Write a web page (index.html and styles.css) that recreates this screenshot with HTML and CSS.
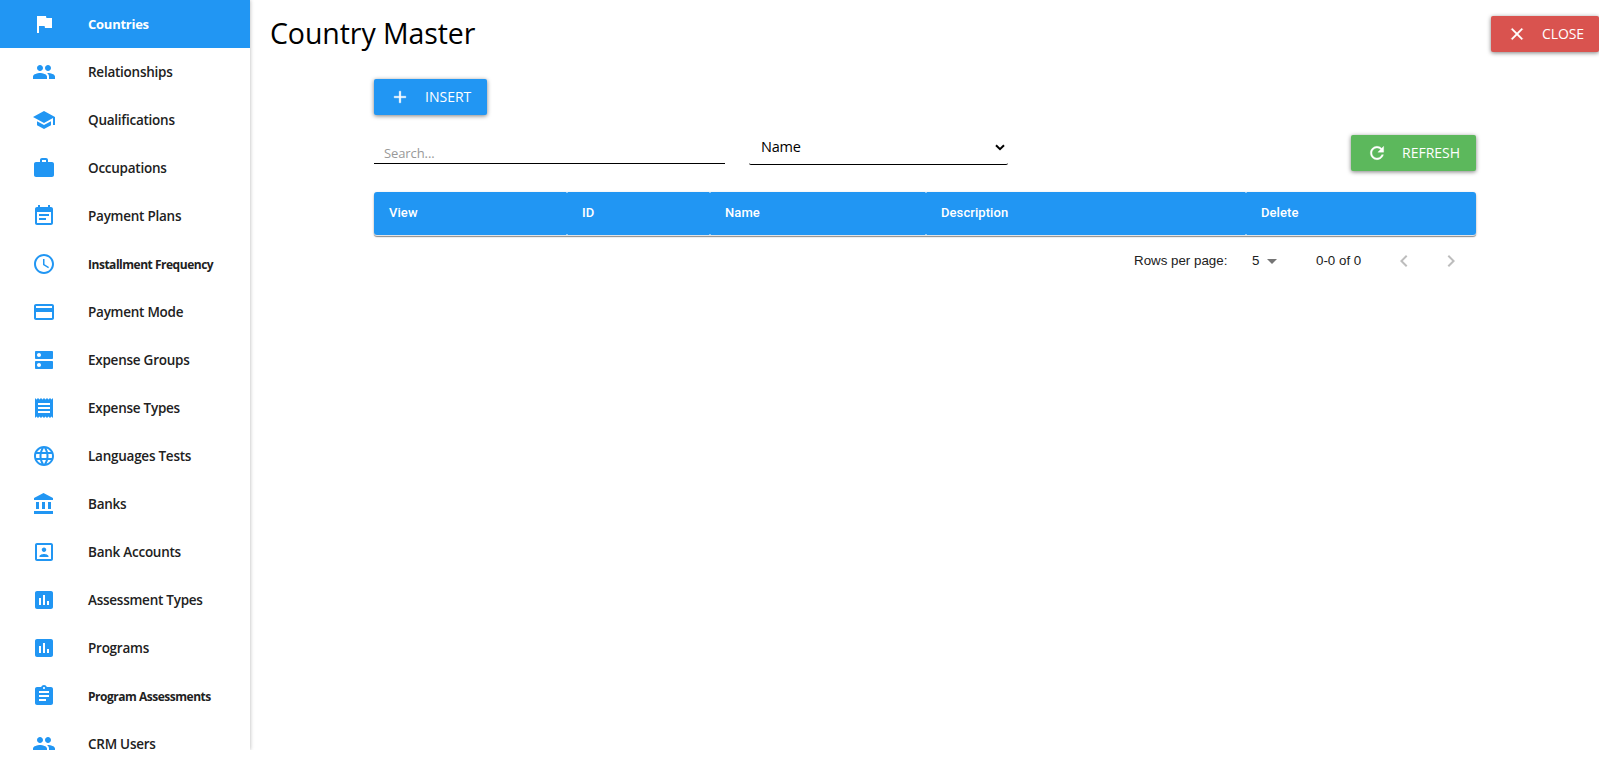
FILE: index.html
```html
<!DOCTYPE html>
<html lang="en">
<head>
<meta charset="utf-8">
<title>Country Master</title>
<link rel="stylesheet" href="styles.css">
</head>
<body>
<div class="app">
  <nav class="sidebar">
    <a class="item active"><svg viewBox="0 0 24 24"><path d="M14.4 6L14 4H5v17h2v-7h5.6l.4 2h7V6z"/></svg><span>Countries</span></a>
    <a class="item"><svg viewBox="0 0 24 24"><path d="M16 11c1.66 0 2.99-1.34 2.99-3S17.66 5 16 5c-1.66 0-3 1.34-3 3s1.34 3 3 3zm-8 0c1.66 0 2.99-1.34 2.99-3S9.66 5 8 5C6.34 5 5 6.34 5 8s1.34 3 3 3zm0 2c-2.33 0-7 1.17-7 3.5V19h14v-2.5c0-2.33-4.67-3.5-7-3.5zm8 0c-.29 0-.62.02-.97.05 1.16.84 1.97 1.97 1.97 3.45V19h6v-2.5c0-2.33-4.67-3.5-7-3.5z"/></svg><span>Relationships</span></a>
    <a class="item"><svg viewBox="0 0 24 24"><path d="M5 13.18v4L12 21l7-3.82v-4L12 17l-7-3.82zM12 3L1 9l11 6 9-4.91V17h2V9L12 3z"/></svg><span>Qualifications</span></a>
    <a class="item"><svg viewBox="0 0 24 24"><path d="M20 6h-4V4c0-1.11-.89-2-2-2h-4c-1.11 0-2 .89-2 2v2H4c-1.11 0-1.99.89-1.99 2L2 19c0 1.11.89 2 2 2h16c1.11 0 2-.89 2-2V8c0-1.11-.89-2-2-2zm-6 0h-4V4h4v2z"/></svg><span>Occupations</span></a>
    <a class="item"><svg viewBox="0 0 24 24"><path d="M17 10H7v2h10v-2zm2-7h-1V1h-2v2H8V1H6v2H5c-1.11 0-1.99.9-1.99 2L3 19c0 1.1.89 2 2 2h14c1.1 0 2-.9 2-2V5c0-1.1-.9-2-2-2zm0 16H5V8h14v11zm-5-5H7v2h7v-2z"/></svg><span>Payment Plans</span></a>
    <a class="item small"><svg viewBox="0 0 24 24"><path d="M11.99 2C6.47 2 2 6.48 2 12s4.47 10 9.99 10C17.52 22 22 17.52 22 12S17.52 2 11.99 2zM12 20c-4.42 0-8-3.58-8-8s3.58-8 8-8 8 3.58 8 8-3.58 8-8 8zm.5-13H11v6l5.25 3.15.75-1.23-4.5-2.67z"/></svg><span>Installment Frequency</span></a>
    <a class="item"><svg viewBox="0 0 24 24"><path d="M20 4H4c-1.11 0-1.99.89-1.99 2L2 18c0 1.11.89 2 2 2h16c1.11 0 2-.89 2-2V6c0-1.11-.89-2-2-2zm0 14H4v-6h16v6zm0-10H4V6h16v2z"/></svg><span>Payment Mode</span></a>
    <a class="item"><svg viewBox="0 0 24 24"><path d="M20 13H4c-.55 0-1 .45-1 1v6c0 .55.45 1 1 1h16c.55 0 1-.45 1-1v-6c0-.55-.45-1-1-1zM7 19c-1.1 0-2-.9-2-2s.9-2 2-2 2 .9 2 2-.9 2-2 2zM20 3H4c-.55 0-1 .45-1 1v6c0 .55.45 1 1 1h16c.55 0 1-.45 1-1V4c0-.55-.45-1-1-1zM7 9c-1.1 0-2-.9-2-2s.9-2 2-2 2 .9 2 2-.9 2-2 2z"/></svg><span>Expense Groups</span></a>
    <a class="item"><svg viewBox="0 0 24 24"><path d="M18 17H6v-2h12v2zm0-4H6v-2h12v2zm0-4H6V7h12v2zM3 22l1.5-1.5L6 22l1.5-1.5L9 22l1.5-1.5L12 22l1.5-1.5L15 22l1.5-1.5L18 22l1.5-1.5L21 22V2l-1.5 1.5L18 2l-1.5 1.5L15 2l-1.5 1.5L12 2l-1.5 1.5L9 2 7.500 3.500 6 2 4.500 3.500 3 2v20z"/></svg><span>Expense Types</span></a>
    <a class="item"><svg viewBox="0 0 24 24"><path d="M11.990 2C6.470 2 2 6.480 2 12s4.470 10 9.990 10C17.520 22 22 17.520 22 12S17.520 2 11.990 2zm6.930 6h-2.950c-.32-1.250-.78-2.450-1.380-3.560 1.840.63 3.370 1.910 4.330 3.560zM12 4.040c.83 1.200 1.480 2.530 1.910 3.960h-3.820c.43-1.430 1.080-2.760 1.910-3.960zM4.260 14C4.100 13.360 4 12.690 4 12s.1-1.360.26-2h3.380c-.08.66-.14 1.320-.14 2s.06 1.340.14 2H4.260zm.82 2h2.950c.32 1.250.78 2.450 1.380 3.560-1.840-.63-3.370-1.900-4.330-3.560zm2.950-8H5.080c.96-1.660 2.490-2.930 4.330-3.560C8.810 5.550 8.350 6.750 8.030 8zM12 19.960c-.83-1.200-1.480-2.530-1.910-3.960h3.820c-.43 1.430-1.080 2.760-1.910 3.960zM14.340 14H9.660c-.09-.66-.16-1.320-.16-2s.07-1.350.16-2h4.680c.09.65.16 1.320.16 2s-.07 1.340-.16 2zm.25 5.560c.6-1.110 1.060-2.310 1.380-3.560h2.950c-.96 1.650-2.490 2.930-4.330 3.560zM16.360 14c.08-.66.14-1.320.14-2s-.06-1.340-.14-2h3.380c.16.64.26 1.310.26 2s-.1 1.360-.26 2h-3.380z"/></svg><span>Languages Tests</span></a>
    <a class="item"><svg viewBox="0 0 24 24"><path d="M4 10v7h3v-7H4zm6 0v7h3v-7h-3zM2 22h19v-3H2v3zm14-12v7h3v-7h-3zm-4.500-9L2 6v2h19V6l-9.500-5z"/></svg><span>Banks</span></a>
    <a class="item"><svg viewBox="0 0 24 24"><path d="M19 5v14H5V5h14m0-2H5c-1.100 0-2 .9-2 2v14c0 1.100.9 2 2 2h14c1.100 0 2-.9 2-2V5c0-1.100-.9-2-2-2zm-7 9c-1.240 0-2.250-1.010-2.250-2.250S10.760 7.500 12 7.500s2.250 1.010 2.250 2.250S13.240 12 12 12zm4.500 5h-9v-.75c0-1.500 3-2.250 4.500-2.250s4.500.75 4.500 2.250V17z"/></svg><span>Bank Accounts</span></a>
    <a class="item"><svg viewBox="0 0 24 24"><path d="M19 3H5c-1.100 0-2 .9-2 2v14c0 1.100.9 2 2 2h14c1.100 0 2-.9 2-2V5c0-1.100-.9-2-2-2zM9 17H7v-7h2v7zm4 0h-2V7h2v10zm4 0h-2v-4h2v4z"/></svg><span>Assessment Types</span></a>
    <a class="item"><svg viewBox="0 0 24 24"><path d="M19 3H5c-1.100 0-2 .9-2 2v14c0 1.100.9 2 2 2h14c1.100 0 2-.9 2-2V5c0-1.100-.9-2-2-2zM9 17H7v-7h2v7zm4 0h-2V7h2v10zm4 0h-2v-4h2v4z"/></svg><span>Programs</span></a>
    <a class="item small"><svg viewBox="0 0 24 24"><path d="M19 3h-4.180C14.400 1.840 13.300 1 12 1c-1.300 0-2.400.84-2.820 2H5c-1.100 0-2 .9-2 2v14c0 1.100.9 2 2 2h14c1.100 0 2-.9 2-2V5c0-1.100-.9-2-2-2zm-7 0c.55 0 1 .45 1 1s-.45 1-1 1-1-.45-1-1 .45-1 1-1zm2 14H7v-2h7v2zm3-4H7v-2h10v2zm0-4H7V7h10v2z"/></svg><span>Program Assessments</span></a>
    <a class="item"><svg viewBox="0 0 24 24"><path d="M16 11c1.660 0 2.990-1.340 2.990-3S17.660 5 16 5c-1.660 0-3 1.340-3 3s1.340 3 3 3zm-8 0c1.660 0 2.990-1.340 2.990-3S9.660 5 8 5C6.340 5 5 6.340 5 8s1.340 3 3 3zm0 2c-2.330 0-7 1.170-7 3.500V19h14v-2.500c0-2.330-4.670-3.500-7-3.500zm8 0c-.29 0-.62.02-.97.05 1.160.84 1.970 1.970 1.970 3.450V19h6v-2.500c0-2.330-4.670-3.500-7-3.500z"/></svg><span>CRM Users</span></a>
  </nav>
  <main class="main">
    <header class="top">
      <h1>Country Master</h1>
      <button class="btn close"><svg viewBox="0 0 24 24"><path d="M19 6.410L17.590 5 12 10.590 6.410 5 5 6.410 10.590 12 5 17.590 6.410 19 12 13.410 17.590 19 19 17.590 13.410 12z"/></svg><span>CLOSE</span></button>
    </header>
    <section class="content">
      <button class="btn insert"><svg viewBox="0 0 24 24"><path d="M19 13h-6v6h-2v-6H5v-2h6V5h2v6h6v2z"/></svg><span>INSERT</span></button>
      <div class="filters">
        <input class="search" placeholder="Search...">
        <div class="select"><span>Name</span><svg viewBox="0 0 10 7"><path d="M1 1.200l4 4 4-4"/></svg></div>
        <button class="btn refresh"><svg viewBox="0 0 24 24"><path d="M17.650 6.350C16.200 4.900 14.210 4 12 4c-4.420 0-7.990 3.580-7.990 8s3.570 8 7.990 8c3.730 0 6.840-2.550 7.730-6h-2.080c-.82 2.330-3.040 4-5.650 4-3.310 0-6-2.690-6-6s2.690-6 6-6c1.660 0 3.140.69 4.220 1.780L13 11h7V4l-2.350 2.350z"/></svg><span>REFRESH</span></button>
      </div>
      <div class="table">
        <div>View</div><div>ID</div><div>Name</div><div>Description</div><div>Delete</div>
      </div>
      <footer class="pager">
        <span class="rows">Rows per page:</span>
        <span class="size">5</span>
        <svg class="caret" viewBox="0 0 24 24"><path d="M7 10l5 5 5-5z"/></svg>
        <span class="range">0-0 of 0</span>
        <svg class="arrow prev" viewBox="0 0 24 24"><path d="M15.410 7.410L14 6l-6 6 6 6 1.410-1.410L10.830 12z"/></svg>
        <svg class="arrow" viewBox="0 0 24 24"><path d="M10 6L8.590 7.410 13.170 12l-4.580 4.590L10 18l6-6z"/></svg>
      </footer>
    </section>
  </main>
</div>
</body>
</html>
```
FILE: styles.css
```css
* { box-sizing: border-box; }
body { margin: 0; background: #fff; overflow: hidden; font-family: "Open Sans", "Noto Sans", sans-serif; }
svg { display: block; fill: currentColor; flex: none; }
.app { display: flex; height: 750px; overflow: hidden; }
.sidebar { width: 250px; flex: none; overflow: hidden; box-shadow: 0 0 4px rgba(0,0,0,.3); }
.item { display: flex; align-items: center; height: 48px; padding-left: 32px; color: #2196f3; }
.item svg { width: 24px; height: 24px; margin-right: 32px; }
.item span { color: #212121; font-size: 13.5px; font-weight: 600; line-height: 18px; letter-spacing: -.25px; white-space: nowrap; padding-bottom: 1px; }
.item.small span { font-size: 12px; font-weight: 700; letter-spacing: -.48px; padding: 2px 0 0; }
.item.active { background: #2196f3; color: #fff; }
.item.active span { color: #fff; font-size: 13px; font-weight: 700; }
.main { flex: 1; min-width: 0; }
.top { display: flex; justify-content: space-between; align-items: flex-start; height: 79px; padding: 16px 0 0 20px; }
h1 { margin: -1px 0 0; font-size: 28.5px; font-weight: 400; line-height: 36px; letter-spacing: -.08px; }
.btn { display: flex; align-items: center; height: 36px; border: 0; border-radius: 2px; padding: 0 16px; color: #fff; background: #2196f3; font: 400 14px/36px "Open Sans", "Noto Sans", sans-serif; letter-spacing: 0; white-space: nowrap; box-shadow: 0 1px 4px rgba(0,0,0,.5); }
.btn svg { width: 20px; height: 20px; margin: 0 15px 0 0; stroke: currentColor; stroke-width: .4; }
.close { width: 108px; background: #d9534f; letter-spacing: -.1px; }
.insert { width: 113px; }
.refresh { width: 125px; margin-left: auto; background: #5cb85c; }
.content { width: 1102px; margin-left: 124px; }
.filters { display: flex; height: 77px; padding-top: 20px; }
.search { width: 351px; height: 29px; border: 0; border-bottom: 1px solid #000; padding: 7px 10px 0; outline: 0; background: none; font: 13px "Open Sans", "Noto Sans", sans-serif; letter-spacing: -.1px; }
.search::placeholder { color: #999; opacity: 1; }
.select { display: flex; justify-content: space-between; width: 259px; height: 30px; margin-left: 24px; padding: 0 3px 0 12px; border-bottom: 1px solid #000; border-radius: 2px; font-size: 14.5px; line-height: 24px; letter-spacing: -.2px; }
.select svg { width: 10px; height: 7px; margin-top: 9px; fill: none; stroke: #000; stroke-width: 2; }
.table { display: grid; grid-template-columns: 192px 143px 216px 320px 231px; height: 43px; border-radius: 3px; color: #fff; background: #2196f3; font: 500 13px/41px Roboto, "Liberation Sans", sans-serif; letter-spacing: .08px; box-shadow: 0 1px 0 #e4e4e4, 0 2px 1px rgba(0,0,0,.4), 0 1px 3px rgba(0,0,0,.2); }
.table div { padding-left: 15px; }
.table div + div { padding-left: 16px; background: linear-gradient(#8cc8f8, #8cc8f8) 0 0 / 2px 1px no-repeat, linear-gradient(#8cc8f8, #8cc8f8) 0 100% / 2px 1px no-repeat; }
.pager { display: flex; align-items: center; height: 51px; padding-left: 760px; color: #212121; font: 13.33px "Liberation Sans", Arial, sans-serif; white-space: nowrap; }
.rows { width: 118px; }
.size { width: 8px; }
.caret { width: 24px; height: 24px; color: #757575; }
.range { width: 108px; padding-left: 32px; }
.arrow { width: 24px; height: 24px; color: #bdbdbd; }
.prev { margin-right: 23px; }
```
